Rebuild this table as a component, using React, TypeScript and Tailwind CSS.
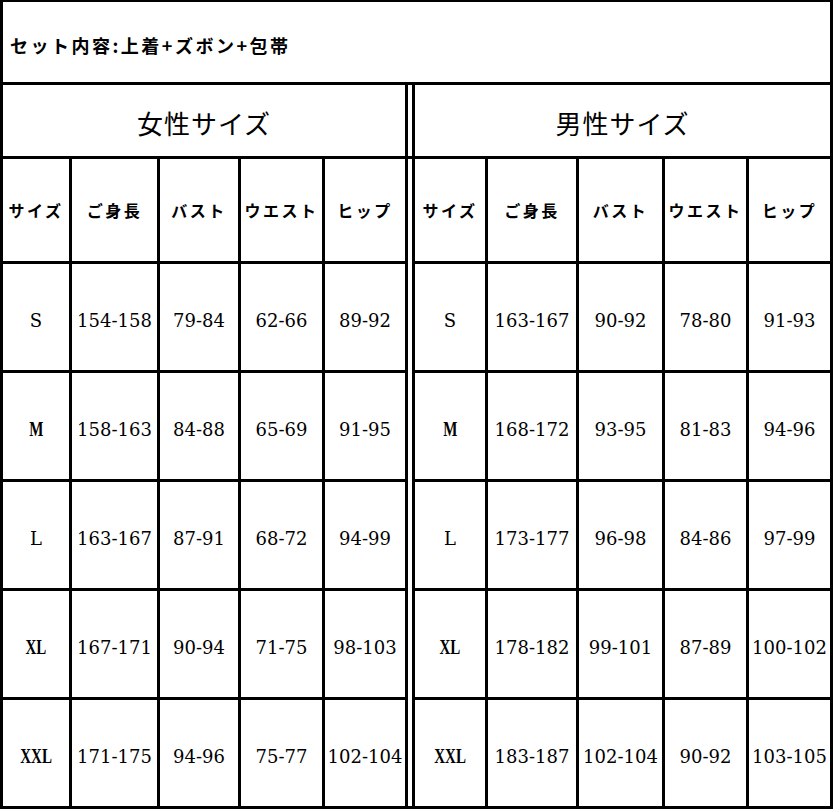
import React from "react";

const women = [
  ["S", "154-158", "79-84", "62-66", "89-92"],
  ["M", "158-163", "84-88", "65-69", "91-95"],
  ["L", "163-167", "87-91", "68-72", "94-99"],
  ["XL", "167-171", "90-94", "71-75", "98-103"],
  ["XXL", "171-175", "94-96", "75-77", "102-104"],
];
const men = [
  ["S", "163-167", "90-92", "78-80", "91-93"],
  ["M", "168-172", "93-95", "81-83", "94-96"],
  ["L", "173-177", "96-98", "84-86", "97-99"],
  ["XL", "178-182", "99-101", "87-89", "100-102"],
  ["XXL", "183-187", "102-104", "90-92", "103-105"],
];
const heads = ["サイズ", "ご身長", "バスト", "ウエスト", "ヒップ"];

function Cell({ children, heavy }: { children: React.ReactNode; heavy?: boolean }) {
  if (heavy) {
    return (
      <div className="bg-white flex items-center justify-center pt-[6px] text-[20px] font-bold text-black font-['Liberation_Serif',serif]">
        <span className="inline-block scale-x-[0.75]">{children}</span>
      </div>
    );
  }
  return (
    <div className="bg-white flex items-center justify-center pt-[6px] text-[18px] text-black font-['DejaVu_Serif',serif]">
      {children}
    </div>
  );
}

function Head({ children }: { children: React.ReactNode }) {
  return (
    <div className="bg-white flex items-center justify-center text-[16px] font-bold tracking-[2.5px] text-black font-['Noto_Sans_CJK_JP','Noto_Sans',sans-serif]">
      {children}
    </div>
  );
}

export default function App() {
  return (
    <div className="w-[835px] h-[810px] bg-white">
      <div className="w-[833px] bg-black pt-[2px] px-[3px] pb-[3px] grid gap-[3px] grid-cols-[66px_85px_78px_81px_80px_4px_70px_88px_83px_81px_81px] grid-rows-[80px_71px_102px_106px_106px_106px_106px_106px]">
        <div className="col-span-11 bg-white flex items-center pl-[7px] pt-[6px] text-[18px] font-bold tracking-[2.5px] text-black font-['Noto_Sans_CJK_JP','Noto_Sans',sans-serif]">
          セット内容:上着+ズボン+包帯
        </div>
        <div className="col-span-5 bg-white flex items-center justify-center pt-[4px] text-[26px] tracking-[1px] text-black font-['Noto_Sans_CJK_JP','Noto_Sans',sans-serif]">
          女性サイズ
        </div>
        <div className="bg-white" />
        <div className="col-span-5 bg-white flex items-center justify-center pt-[4px] text-[26px] tracking-[1px] text-black font-['Noto_Sans_CJK_JP','Noto_Sans',sans-serif]">
          男性サイズ
        </div>
        {heads.map((h) => (
          <Head key={"w" + h}>{h}</Head>
        ))}
        <div className="bg-white row-span-6" />
        {heads.map((h) => (
          <Head key={"m" + h}>{h}</Head>
        ))}
        {women.map((w, i) => (
          <React.Fragment key={"r" + i}>
            {w.map((v, j) => (
              <Cell key={"w" + j} heavy={j === 0 && v !== "S" && v !== "L"}>
                {v}
              </Cell>
            ))}
            {men[i].map((v, j) => (
              <Cell key={"m" + j} heavy={j === 0 && v !== "S" && v !== "L"}>
                {v}
              </Cell>
            ))}
          </React.Fragment>
        ))}
      </div>
    </div>
  );
}
